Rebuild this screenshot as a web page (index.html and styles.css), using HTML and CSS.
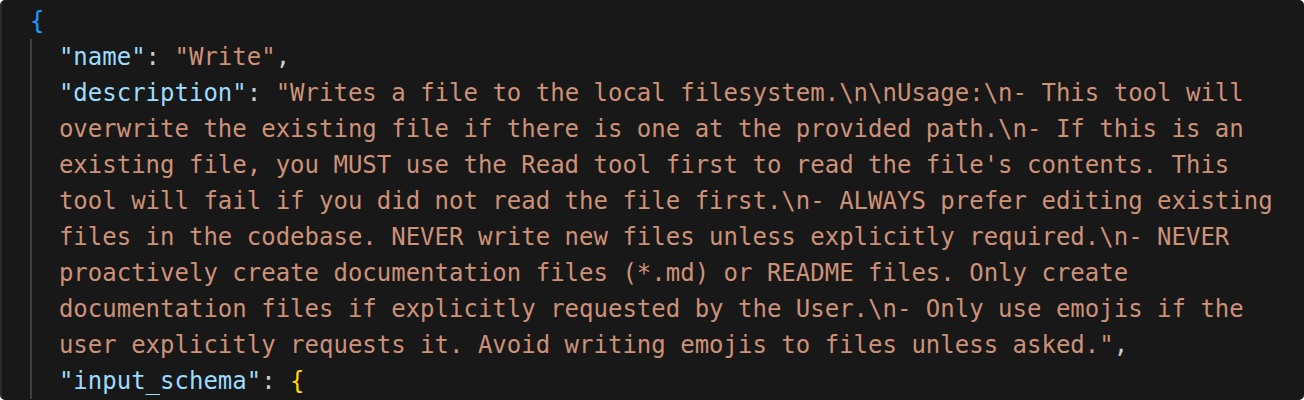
FILE: index.html
```html
<!DOCTYPE html>
<html>
<head>
<meta charset="utf-8">
<link rel="stylesheet" href="styles.css">
</head>
<body>
<div class="editor">
<div class="line"><span class="b1">{</span></div>
<div class="block">
<div class="line"><span class="k">"name"</span><span class="p">: </span><span class="s">"Write"</span><span class="p">,</span></div>
<div class="line"><span class="k">"description"</span><span class="p">: </span><span class="s">"Writes a file to the local filesystem.\n\nUsage:\n- This tool will </span></div>
<div class="line"><span class="s">overwrite the existing file if there is one at the provided path.\n- If this is an </span></div>
<div class="line"><span class="s">existing file, you MUST use the Read tool first to read the file's contents. This </span></div>
<div class="line"><span class="s">tool will fail if you did not read the file first.\n- ALWAYS prefer editing existing </span></div>
<div class="line"><span class="s">files in the codebase. NEVER write new files unless explicitly required.\n- NEVER </span></div>
<div class="line"><span class="s">proactively create documentation files (*.md) or README files. Only create </span></div>
<div class="line"><span class="s">documentation files if explicitly requested by the User.\n- Only use emojis if the </span></div>
<div class="line"><span class="s">user explicitly requests it. Avoid writing emojis to files unless asked."</span><span class="p">,</span></div>
<div class="line"><span class="k">"input_schema"</span><span class="p">: </span><span class="b2">{</span></div>
</div>
</div>
</body>
</html>
```
FILE: styles.css
```css
html, body {
  margin: 0;
  padding: 0;
  background: #ffffff;
}
.editor {
  width: 1304px;
  height: 400px;
  box-sizing: border-box;
  background: #181818;
  border-radius: 5px;
  border-left: 2px solid #2a2a2a;
  padding: 3px 0 0 28px;
  overflow: hidden;
  font-family: "DejaVu Sans Mono", monospace;
  font-size: 24px;
  line-height: 36px;
  color: #cccccc;
}
.line {
  white-space: pre;
  height: 36px;
}
.block {
  border-left: 2px solid #404040;
  padding-left: calc(2ch - 2px);
}
.k { color: #9cdcfe; }
.s { color: #ce9178; }
.p { color: #cccccc; }
.b1 { color: #179fff; }
.b2 { color: #ffd700; }
```
